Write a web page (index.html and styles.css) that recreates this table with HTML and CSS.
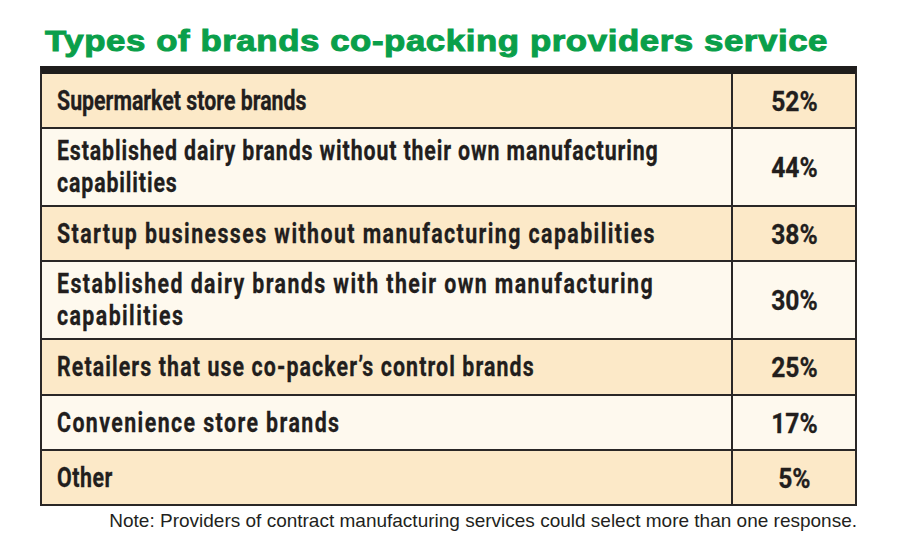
FILE: index.html
```html
<!DOCTYPE html>
<html lang="en">
<head>
<meta charset="utf-8">
<title>Types of brands co-packing providers service</title>
<link rel="stylesheet" href="styles.css">
</head>
<body>
<div class="page">
  <h1 class="title"><span class="title-text">Types of brands co-packing providers service</span></h1>
  <div class="table">
    <div class="row peach single"><div class="label"><span class="txt">Supermarket store brands</span></div><div class="pct"><span class="num">52%</span></div></div>
    <div class="row light double"><div class="label"><span class="txt track-1">Established dairy brands without their own manufacturing capabilities</span></div><div class="pct"><span class="num">44%</span></div></div>
    <div class="row peach single"><div class="label"><span class="txt track-3">Startup businesses without manufacturing capabilities</span></div><div class="pct"><span class="num">38%</span></div></div>
    <div class="row light double"><div class="label"><span class="txt track-3">Established dairy brands with their own manufacturing capabilities</span></div><div class="pct"><span class="num">30%</span></div></div>
    <div class="row peach single mid"><div class="label"><span class="txt track-2">Retailers that use co-packer’s control brands</span></div><div class="pct"><span class="num">25%</span></div></div>
    <div class="row light single"><div class="label"><span class="txt track-3">Convenience store brands</span></div><div class="pct"><span class="num">17%</span></div></div>
    <div class="row peach single last"><div class="label"><span class="txt track-half">Other</span></div><div class="pct"><span class="num">5%</span></div></div>
  </div>
  <p class="note">Note: Providers of contract manufacturing services could select more than one response.</p>
</div>
</body>
</html>
```
FILE: styles.css
```css
html, body {
  margin: 0;
  padding: 0;
  background: #ffffff;
}

.page {
  width: 817px;
  padding-left: 40px;
}

.title {
  margin: 0;
  height: 66px;
  box-sizing: border-box;
  padding: 23px 0 0 5px;
  font-family: "Liberation Sans", Arial, sans-serif;
  font-weight: 700;
  font-size: 30px;
  line-height: 36px;
  color: #0a9f4a;
  white-space: nowrap;
}

.title-text {
  display: inline-block;
  transform: scaleX(1.16);
  transform-origin: left center;
  letter-spacing: 0.5px;
  -webkit-text-stroke: 1px #0a9f4a;
}

.table {
  border: 2px solid #2a2726;
  border-top: 8px solid #1f1d1c;
  display: flex;
  flex-direction: column;
}

.row {
  display: grid;
  grid-template-columns: 689px 124px;
  box-sizing: border-box;
  border-bottom: 2px solid #2a2726;
}

.row.last {
  border-bottom: none;
}

.single { height: 55px; }
.row.last { height: 53px; }
.mid { height: 56px; }
.double { height: 78px; }

.peach { background: #fce9c8; }
.light { background: #fef9ee; }

.label {
  display: flex;
  align-items: center;
  padding-left: 15px;
  overflow: hidden;
}

.txt {
  display: block;
  flex-shrink: 0;
  width: 835px;
  transform: scaleX(0.79);
  transform-origin: left center;
  font-family: Roboto, "Liberation Sans", sans-serif;
  font-weight: 700;
  font-size: 27px;
  line-height: 32px;
  color: #221e1d;
  -webkit-text-stroke: 0.3px #221e1d;
}

.track-half { letter-spacing: 0.7px; }
.track-1 { letter-spacing: 1.1px; }
.track-2 { letter-spacing: 1.4px; }
.track-3 { letter-spacing: 1.8px; }

.pct {
  border-left: 2px solid #2a2726;
  display: flex;
  align-items: center;
  justify-content: center;
  padding-top: 2px;
}

.num {
  display: inline-block;
  transform: scaleX(0.88);
  font-family: Roboto, "Liberation Sans", sans-serif;
  font-weight: 700;
  font-size: 28px;
  line-height: 32px;
  color: #221e1d;
  -webkit-text-stroke: 0.3px #221e1d;
}

.note {
  margin: 3px 0 0;
  text-align: right;
  font-family: "Liberation Sans", Arial, sans-serif;
  font-size: 19px;
  line-height: 24px;
  color: #231f20;
  white-space: nowrap;
}
```
